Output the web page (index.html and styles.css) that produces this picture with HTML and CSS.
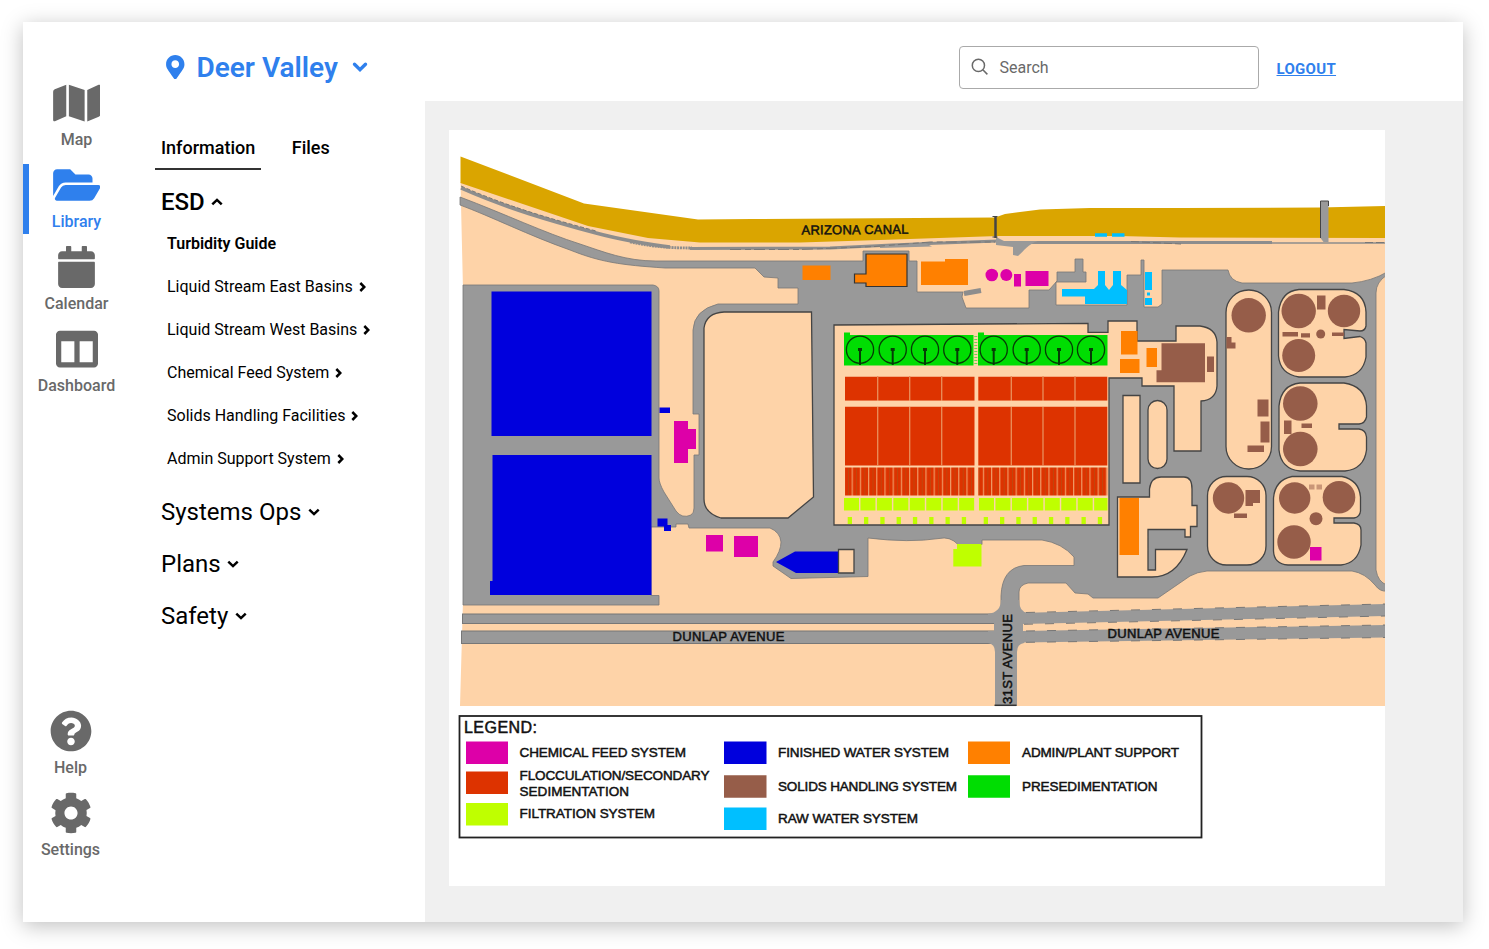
FILE: index.html
```html
<!DOCTYPE html>
<html lang="en">
<head>
<meta charset="utf-8">
<title>Deer Valley Library</title>
<link rel="stylesheet" href="styles.css">
</head>
<body>
<div class="app">
  <nav class="rail">
    <div class="rail-group">
      <a class="rail-item"><span class="rail-icon"><svg width="47.5" height="42" viewBox="0 0 576 512"><path d="M0 117.66v346.32c0 11.32 11.43 19.06 21.94 14.86L160 416V32L20.12 87.95A32.006 32.006 0 0 0 0 117.66zM192 416l192 64V96L192 32v384zM554.06 33.16L416 96v384l139.88-55.95A31.996 31.996 0 0 0 576 394.34V48.02c0-11.32-11.43-19.06-21.94-14.86z"/></svg></span><span class="rail-label">Map</span></a>
      <a class="rail-item active"><span class="rail-icon"><svg width="47.5" height="42" viewBox="0 0 576 512"><path d="M572.694 292.093L500.27 416.248A63.997 63.997 0 0 1 444.989 448H45.025c-18.523 0-30.064-20.093-20.731-36.093l72.424-124.155A64 64 0 0 1 152 256h399.964c18.523 0 30.064 20.093 20.73 36.093zM152 224h328v-48c0-26.51-21.49-48-48-48H272l-64-64H48C21.49 64 0 85.49 0 112v278.046l69.077-118.418C86.214 242.25 117.989 224 152 224z"/></svg></span><span class="rail-label">Library</span></a>
      <a class="rail-item"><span class="rail-icon"><svg width="37" height="42" viewBox="0 0 448 512"><path d="M12 192h424c6.6 0 12 5.4 12 12v260c0 26.5-21.5 48-48 48H48c-26.5 0-48-21.5-48-48V204c0-6.6 5.4-12 12-12zm436-44v-36c0-26.5-21.5-48-48-48h-48V12c0-6.6-5.4-12-12-12h-40c-6.6 0-12 5.4-12 12v52H160V12c0-6.6-5.4-12-12-12h-40c-6.6 0-12 5.4-12 12v52H48C21.5 64 0 85.5 0 112v36c0 6.6 5.4 12 12 12h424c6.6 0 12-5.4 12-12z"/></svg></span><span class="rail-label">Calendar</span></a>
      <a class="rail-item"><span class="rail-icon"><svg width="42" height="42" viewBox="0 0 512 512"><path d="M464 32H48C21.49 32 0 53.49 0 80v352c0 26.51 21.49 48 48 48h416c26.51 0 48-21.49 48-48V80c0-26.51-21.49-48-48-48zM224 416H64V160h160v256zm224 0H288V160h160v256z"/></svg></span><span class="rail-label">Dashboard</span></a>
    </div>
    <div class="rail-group rail-bottom">
      <a class="rail-item"><span class="rail-icon"><svg width="42" height="42" viewBox="0 0 512 512"><path d="M504 256c0 136.997-111.043 248-248 248S8 392.997 8 256C8 119.083 119.043 8 256 8s248 111.083 248 248zM262.655 90c-54.497 0-89.255 22.957-116.549 63.758-3.536 5.286-2.353 12.415 2.715 16.258l34.699 26.31c5.205 3.947 12.621 3.008 16.665-2.122 17.864-22.658 30.113-35.797 57.303-35.797 20.429 0 45.698 13.148 45.698 32.958 0 14.976-12.363 22.667-32.534 33.976C247.128 238.528 216 254.941 216 296v4c0 6.627 5.373 12 12 12h56c6.627 0 12-5.373 12-12v-1.333c0-28.462 83.186-29.647 83.186-106.667 0-58.002-60.165-102-116.531-102zM256 338c-25.365 0-46 20.635-46 46 0 25.364 20.635 46 46 46s46-20.636 46-46c0-25.365-20.635-46-46-46z"/></svg></span><span class="rail-label">Help</span></a>
      <a class="rail-item"><span class="rail-icon"><svg width="42" height="42" viewBox="0 0 512 512"><path d="M487.4 315.7l-42.6-24.6c4.3-23.2 4.3-47 0-70.2l42.6-24.6c4.9-2.8 7.1-8.6 5.5-14-11.1-35.6-30-67.8-54.7-94.6-3.8-4.1-10-5.1-14.8-2.3L380.8 110c-17.9-15.4-38.5-27.3-60.8-35.1V25.8c0-5.6-3.9-10.5-9.4-11.7-36.7-8.2-74.3-7.8-109.2 0-5.5 1.2-9.4 6.1-9.4 11.7V75c-22.2 7.9-42.8 19.8-60.8 35.1L88.7 85.5c-4.9-2.8-11-1.9-14.8 2.3-24.7 26.7-43.6 58.9-54.7 94.6-1.7 5.4.6 11.2 5.5 14L67.3 221c-4.3 23.2-4.3 47 0 70.2l-42.6 24.6c-4.9 2.8-7.1 8.6-5.5 14 11.1 35.6 30 67.8 54.7 94.6 3.8 4.1 10 5.1 14.8 2.3l42.6-24.6c17.9 15.4 38.5 27.3 60.8 35.1v49.2c0 5.6 3.9 10.5 9.4 11.7 36.7 8.2 74.3 7.8 109.2 0 5.5-1.2 9.4-6.1 9.4-11.7v-49.2c22.2-7.9 42.8-19.8 60.8-35.1l42.6 24.6c4.9 2.8 11 1.9 14.8-2.3 24.7-26.7 43.6-58.9 54.7-94.6 1.5-5.5-.7-11.3-5.6-14.1zM256 336c-44.1 0-80-35.9-80-80s35.9-80 80-80 80 35.9 80 80-35.9 80-80 80z"/></svg></span><span class="rail-label">Settings</span></a>
    </div>
  </nav>

  <div class="main">
    <header class="topbar">
      <div class="site">
        <svg class="pin" width="18.5" height="24.5" viewBox="0 0 384 512"><path d="M172.268 501.67C26.97 291.031 0 269.413 0 192 0 85.961 85.961 0 192 0s192 85.961 192 192c0 77.413-26.97 99.031-172.268 309.67-9.535 13.774-29.93 13.773-39.464 0zM192 272c44.183 0 80-35.817 80-80s-35.817-80-80-80-80 35.817-80 80 35.817 80 80 80z"/></svg>
        <span class="site-name">Deer Valley</span>
        <svg class="site-chevron" width="16" height="12" viewBox="0 0 16 12"><path d="M2.500 3.200L8 8.600l5.500-5.400"/></svg>
      </div>
      <div class="tools">
        <label class="search">
          <svg width="18" height="18" viewBox="0 0 18 18"><circle cx="7.4" cy="7.4" r="6.1"/><path d="M11.8 11.8l4.600 4.600"/></svg>
          <span>Search</span>
        </label>
        <a class="logout">LOGOUT</a>
      </div>
    </header>

    <div class="body">
      <aside class="library">
        <div class="tabs"><a class="tab current">Information</a><a class="tab">Files</a></div>
        <h2 class="section open">ESD <svg width="12" height="8" viewBox="0 0 12 8"><path d="M1.3 6.4L6 1.9l4.7 4.5"/></svg></h2>
        <ul class="links">
          <li class="bold">Turbidity Guide</li>
          <li>Liquid Stream East Basins <svg width="7" height="10" viewBox="0 0 7 10"><path d="M1.3 1l4 4-4 4"/></svg></li>
          <li>Liquid Stream West Basins <svg width="7" height="10" viewBox="0 0 7 10"><path d="M1.3 1l4 4-4 4"/></svg></li>
          <li>Chemical Feed System <svg width="7" height="10" viewBox="0 0 7 10"><path d="M1.3 1l4 4-4 4"/></svg></li>
          <li>Solids Handling Facilities <svg width="7" height="10" viewBox="0 0 7 10"><path d="M1.3 1l4 4-4 4"/></svg></li>
          <li>Admin Support System <svg width="7" height="10" viewBox="0 0 7 10"><path d="M1.3 1l4 4-4 4"/></svg></li>
        </ul>
        <h2 class="section">Systems Ops <svg width="12" height="8" viewBox="0 0 12 8"><path d="M1.3 1.6L6 6.1l4.7-4.5"/></svg></h2>
        <h2 class="section">Plans <svg width="12" height="8" viewBox="0 0 12 8"><path d="M1.3 1.6L6 6.1l4.7-4.5"/></svg></h2>
        <h2 class="section">Safety <svg width="12" height="8" viewBox="0 0 12 8"><path d="M1.3 1.6L6 6.1l4.7-4.5"/></svg></h2>
      </aside>

      <main class="viewer">
        <svg class="plan" width="936" height="756" viewBox="449 130 936 756">
          <defs>
            <pattern id="slots" x="843.4" y="0" width="8.2" height="40" patternUnits="userSpaceOnUse">
              <rect class="red" width="8.2" height="40"/>
              <path d="M.6 0v40" stroke="#ee9a66" stroke-width="1.2"/>
              <path d="M5 0v40" stroke="#b84a10" stroke-width=".8"/>
            </pattern>
          </defs>
          <!-- ground and canal -->
          <path class="land" d="M460.500 182L588 225l110 16 300-7 387 2V706H460L463 600V290Z"/>
          <path class="canal" d="M460.500 156.500L584 203.500l114 16 54-.5 243-1.500 10-3.500 35-4.500 50-1.500h90l140-.500 65-1.500V238l-205-.500-60-1.500H998l-118 4-80 2.500H700l-52-4.500-60-12-127.500-43Z"/>
          <!-- canal side roads -->
          <path class="road-line" stroke-width="3.500" d="M461 188c45 20 90 33 135 45 22 6 55 12 74 14"/>
          <path class="edge" d="M461 186c45 20 90 33 135 45" stroke-dasharray="4 2"/>
          <path class="road-line" stroke-width="2.800" stroke-dasharray="2 .8" d="M630 242c20 4 35 6 62 6"/>
          <path class="road-line" stroke-width="3" d="M690 248.500l140-.5 62-3 36-1.500 70-2.500"/>
          <path class="road" d="M880 248l52-1.500-6-3-46 2Z"/>
          <path class="edge" stroke-dasharray="11 4 6 3" d="M730 249.500h70l75-3 55-4.500 65 0"/>
          <path class="road-line" stroke-width="2.800" d="M996 242.500h276"/>
          <path class="road-line" stroke-width="1.500" d="M1272 243h113"/>
          <path class="edge" stroke-dasharray="8 3" d="M1131 241.500l50 2.500M1365 242.500h20"/>
          <path class="road" d="M996 237l8 4h34c-10 3-14 10-20 15l-5-1v-8l-17-2Z"/>
          <path class="dark" d="M995.500 216v22" stroke-width="2.500"/>
          <path class="island-line" d="M992.500 216.500h5M992.500 237h5"/>
          <path class="road" d="M1320.500 238v-37h8v41h-5Z"/>
          <path class="island-line" fill="none" d="M1320.500 238v-37h8v5"/>
          <!-- main plant pavement -->
          <path class="road edged" d="M460 197c45 17 85 36 120 47 24 8 46 17 76 17H863V251h46v10h8v31h46l-1 5 4 11h63V290h20l8-9V272h18V259h8v13h3v10h-30v23h71V275h14V260h3v47h14l4-3V270h66q2 11 14 13h110q20-2 35-11v3q-11 7-11 18V570q2 12 11 15v6q-7 1-12-6-10-12-23-14H1207q-10 1-17 5l-32 22h-65l-5-4-13-1-9-10h-38q-9 2-9 9v22q5 6 12 6h-42q8-2 12-8v-16Q1002 568 1024 565.500H1074V557Q1062 543 1042 540H982V544.500H958Q950 536 939 538.500 909 543 868 538V576.500L791 578.500 773 566V562Q781 551 781 542 780 532 770 528H689L688 524H676V527H651V595.500H659V605H463V285h190q6 1 6 6V478q0 5 5 14l12 19q6 8 15 4 3-2 3-7V455h5V414h-6V330q1-20 25-26h80V288h-20V278l-14-1-9-9h-90C620 265 600 262 570 250 530 236 490 216 460 205Z"/>
          <path class="road-line" d="M964 293.500l17-3" stroke-width="5"/>
          <!-- finished water -->
          <path class="water" d="M491.500 291.500H651.500V436H491.500ZM492.500 455H651.500V595H490V581h2.500ZM659.500 407.500h10.500v5.500h-10.500ZM657.500 518.500h10v6.500h3.500v6h-7v-4.500h-6.500ZM776 562l19-10.500h43.500V573H796Z"/>
          <!-- peach islands -->
          <path class="island" d="M724 312H811.500L813.500 497 788 518H721Q704 513 704 499V328Q706 313 724 312Z"/>
          <path class="island" d="M834 325L1088 323.300V332.300H1108V321H1137V341H1176V326H1200Q1216 328 1217 342V386Q1216 400 1201 401V451H1174V386H1142V378H1109V525H834Z"/>
          <path class="island" d="M838.500 549.500h15.500v23.500h-15.500ZM1123 395.500h17V483h-17Z"/>
          <rect class="island" x="1148" y="400.500" width="19" height="68" rx="9.500"/>
          <path class="island" d="M1117.500 497H1149.500V489Q1151 477 1161 477H1184Q1192 477 1192 489V505.500H1197V526.500H1190.500V537H1185V529.500H1148V570H1155.500V549.500H1187Q1176 577 1152 577H1117.500Z"/>
          <rect class="island" x="1226" y="290" width="45.500" height="179" rx="22.500"/>
          <path class="island" d="M1299 289.500H1344Q1365 292 1366 312V326Q1365 331 1360 331L1344 329.500V338.500L1360 336.500Q1365 338 1366 343V357Q1363 375 1345 377H1299Q1280 374 1278.500 356V312Q1281 291 1299 289.500Z"/>
          <path class="island" d="M1300 383H1344Q1365 386 1366.500 406V417Q1365 423.500 1359 424H1339V429H1359Q1366 430 1366.500 437V450Q1364 469 1345 471H1300Q1281 469 1279 450V406Q1281 385 1300 383Z"/>
          <rect class="island" x="1207.500" y="476.500" width="58.500" height="88.500" rx="19"/>
          <path class="island" d="M1292 476.500H1342Q1359 480 1360.500 497V511Q1360 517 1354 518H1334V523H1354Q1361 524 1361 530V545Q1358 563 1341 565H1288Q1274 564 1273.500 551V498Q1275 480 1292 476.500Z"/>
          <!-- presedimentation -->
          <path class="green" d="M844 332.500h6v2.500h123.500v30.500H844ZM978 332.500h6v2.500h123.500v30.500H978Z"/>
          <path d="M975.800 336v30" stroke="#65d950" stroke-width="3" stroke-dasharray="1 2"/>
          <g fill="none" stroke="#063c06" stroke-width="1.300">
            <circle cx="860" cy="349.700" r="13.600"/><circle cx="892.700" cy="349.700" r="13.600"/><circle cx="925" cy="349.700" r="13.600"/><circle cx="957.300" cy="349.700" r="13.600"/><circle cx="993.700" cy="349.700" r="13.600"/><circle cx="1026.700" cy="349.700" r="13.600"/><circle cx="1059" cy="349.700" r="13.600"/><circle cx="1091" cy="349.700" r="13.600"/>
            <path stroke-width="2" d="M860 349v16M892.700 349v16M925 349v16M957.300 349v16M993.700 349v16M1026.700 349v16M1059 349v16M1091 349v16"/>
            <path stroke-width="3" d="M858 349.500h4M890.700 349.500h4M923 349.500h4M955.300 349.500h4M991.700 349.500h4M1024.700 349.500h4M1057 349.500h4M1089 349.500h4"/>
          </g>
          <!-- flocculation and sedimentation -->
          <path class="red" d="M845 376.700h129.500v24H845ZM978.300 376.700h129v24h-129ZM845 406.500h129.500v59H845ZM978.300 406.500h129v59h-129Z"/>
          <path d="M877.700 376v90M909.700 376v90M941.700 376v90M1011.300 376v90M1043 376v90M1075 376v90" stroke="#e9905c" stroke-width="1.300"/>
          <path class="land" d="M844 400.700h264v5.800H844Z"/>
          <path fill="url(#slots)" d="M845 467.500h129.500v28H845ZM978.300 467.500h129v28h-129Z"/>
          <!-- filtration -->
          <g fill="none" stroke="#bfff00">
            <path stroke-width="12.500" stroke-dasharray="15 1.450" d="M844 504.300h130.500M979 504.300h128.500"/>
            <path stroke-width="7" stroke-dasharray="4.300 12" d="M847.700 520.500h126M983.700 520.500h122"/>
          </g>
          <path class="lime" d="M957 544h24.500v22.500H953.300V549h3.700Z"/>
          <!-- chemical feed -->
          <path class="chem" d="M674 421h14v8h8v20h-8v14h-14ZM706 535h17v16.500h-17ZM734 536h24v21h-24ZM1014 274h7v12.500h-7ZM1025.500 271h23v15h-23ZM1310 547h11.500v13.500H1310Z"/>
          <circle class="chem" cx="991.800" cy="275" r="6.300"/><circle class="chem" cx="1006.300" cy="275" r="6"/>
          <!-- admin and plant support -->
          <path class="admin" d="M802.500 265.500h28v14.500h-28ZM921 261.500h24v-2.500h23v26h-47ZM1121 331h16.500v23.500H1121ZM1120 359h19.500v14H1120ZM1146.500 348h10.500v19h-10.500ZM1119.500 498h19.500v57h-19.500Z"/>
          <path class="admin" stroke="#333" stroke-width="1.200" d="M866 254h41v32.500h-41V283h-11.500v-9H866Z"/>
          <!-- raw water -->
          <path class="raw" d="M1095 233.300h12v3.400h-12ZM1112 233.300h12.500v3.400H1112ZM1062 289h32l4-4v-14h7v14l4 5 4-5v-14h8v14l6 5v14h-42v-7.500H1062ZM1145 272h7v18h-7ZM1147 292.500h3v3h-3ZM1145 298h7v7h-7Z"/>
          <!-- solids handling -->
          <path class="solid" d="M1161.500 343.300h43.500v39h-48.500v-12h5ZM1207 356.500h7v15.500h-7ZM1226.500 337h5v5.500h4v6h-9ZM1257.500 399.500h11v17h-11ZM1260.500 421.500h9v21h-9ZM1247.500 445.500h16.500v6.500h-16.500ZM1317 295.500h8.500v14h-8.500ZM1282.500 332h15.500v4.500h-15.500ZM1301 333.300h9v4.200h-9ZM1332 332.500h12v3.500h-12ZM1284 420.500h7.500v13.500h-7.500ZM1301.500 423.500h10.500v4.500h-10.500ZM1245.500 490h14.500v13h-7v3h-7.500ZM1234 513.500h13v4.500h-13Z"/>
          <path fill="#c99577" d="M1309 484.500h5.500v5h-5.500ZM1316.500 484.500h5.500v5h-5.500Z"/>
          <g class="solid">
            <circle cx="1248.700" cy="315.300" r="17.200"/><circle cx="1298.700" cy="311" r="17.200"/><circle cx="1344" cy="311" r="16.200"/><circle cx="1298.700" cy="355.500" r="16.500"/><circle cx="1320.700" cy="334" r="4.500"/>
            <circle cx="1300.300" cy="403.500" r="17.300"/><circle cx="1300.300" cy="449" r="17.300"/><circle cx="1228.500" cy="498" r="15.700"/><circle cx="1294.700" cy="498" r="15.700"/><circle cx="1339" cy="497.300" r="16.300"/><circle cx="1316" cy="518.700" r="6.500"/><circle cx="1294" cy="542" r="16.700"/>
          </g>
          <!-- avenues -->
          <path class="road" d="M462 614H995v9H462ZM461 631H997v12.500H461ZM1016 613L1385 604v12L1022 624ZM1022 631l363-6v12.500l-363 5Z"/>
          <path class="edge" d="M462 614H995M462 623.500H995M461 631H995M461 643.500H995M462.500 614v9M461.500 631v12"/>
          <path class="road" d="M1001 600h18q0 12 9 13v11h-5v7h5l-4 12q-7 1-7 9v54h-22v-54q0-8-7-9v-12h6v-8h-6v-9q13-2 13-14Z"/>
          <path class="edge" stroke-dasharray="9 12" stroke-width="1.300" d="M1026 612.500L1385 604M1024 624.300L1385 616M1026 631L1385 625M1026 642.300L1385 637.500"/>
          <path d="M994.500 705.300h22" stroke="#333" stroke-width="1.500"/>
          <g class="map-text">
            <text x="801.500" y="234.500" textLength="107" transform="rotate(-.4 801 235)">ARIZONA CANAL</text>
            <text x="672.500" y="641" textLength="112">DUNLAP AVENUE</text>
            <text x="1107.500" y="638.300" textLength="112">DUNLAP AVENUE</text>
            <text transform="translate(1012.300 704) rotate(-90)" textLength="90">31ST AVENUE</text>
          </g>
          <!-- legend -->
          <rect x="459.500" y="716" width="742" height="121.500" fill="none" stroke="#222" stroke-width="1.800"/>
          <path class="chem" d="M466 741.500h42v22.500h-42Z"/><path class="red" d="M466 771.500h42v22.500h-42Z"/><path class="lime" d="M466 803h42v22.500h-42Z"/>
          <path class="water" d="M724 741.500h42.500v22.500H724Z"/><path class="solid" d="M724 775.300h42.500v22.500H724Z"/><path class="raw" d="M724 807.500h42.500V830H724Z"/>
          <path class="admin" d="M968 741.500h42v22.500h-42Z"/><path class="green" d="M968 775.300h42v22.500h-42Z"/>
          <g class="legend-text">
            <text class="legend-title" x="464" y="732.800" textLength="73">LEGEND:</text>
            <text x="519.500" y="756.500" textLength="166.500">CHEMICAL FEED SYSTEM</text>
            <text x="519.500" y="780" textLength="190">FLOCCULATION/SECONDARY</text>
            <text x="519.500" y="795.700" textLength="109.500">SEDIMENTATION</text>
            <text x="519.500" y="818.300" textLength="135.500">FILTRATION SYSTEM</text>
            <text x="778" y="756.500" textLength="171">FINISHED WATER SYSTEM</text>
            <text x="778" y="790.800" textLength="179">SOLIDS HANDLING SYSTEM</text>
            <text x="778" y="823" textLength="140">RAW WATER SYSTEM</text>
            <text x="1022" y="756.500" textLength="157">ADMIN/PLANT SUPPORT</text>
            <text x="1022" y="790.800" textLength="135.500">PRESEDIMENTATION</text>
          </g>
        </svg>
      </main>
    </div>
  </div>
</div>
</body>
</html>
```
FILE: styles.css
```css
* { box-sizing: border-box; }
body {
  margin: 0;
  height: 949px;
  padding: 22px 0 0 23px;
  overflow: hidden;
  background: #fff;
  font-family: Roboto, "Liberation Sans", sans-serif;
  color: #000;
}
svg { display: block; flex: none; }
.app {
  display: flex;
  width: 1440px;
  height: 900px;
  background: #fff;
  box-shadow: 0 4px 20px rgba(0, 0, 0, .25);
}

/* icon rail */
.rail {
  display: flex;
  flex-direction: column;
  justify-content: space-between;
  width: 107px;
  padding: 60px 0;
}
.rail-group { display: flex; flex-direction: column; gap: 12px; }
.rail-bottom { width: 95px; }
.rail-item {
  display: flex;
  flex-direction: column;
  align-items: center;
  height: 70px;
  color: #696969;
  fill: #696969;
}
.rail-item.active {
  color: #2f80ed;
  fill: #2f80ed;
  box-shadow: inset 6px 0 #2f80ed;
}
.rail-icon { display: flex; align-items: center; height: 42px; }
.rail-label {
  margin-top: 6px;
  font-size: 16px;
  line-height: 19px;
  font-weight: 500;
}

.main { display: flex; flex-direction: column; flex: 1; }

/* top bar */
.topbar {
  display: flex;
  align-items: center;
  justify-content: space-between;
  height: 79px;
  padding: 11px 126.500px 0 36px;
}
.site { display: flex; align-items: center; color: #2f80ed; fill: #2f80ed; }
.site-name {
  margin-left: 12px;
  font-size: 28px;
  line-height: 33px;
  font-weight: 600;
}
.site-chevron {
  margin-left: 14px;
  fill: none;
  stroke: #2f80ed;
  stroke-width: 3.400;
  stroke-linecap: round;
}
.tools { display: flex; align-items: center; gap: 18px; }
.search {
  display: flex;
  align-items: center;
  gap: 11px;
  width: 300px;
  height: 43px;
  padding-left: 11px;
  border: 1px solid #aaa;
  border-radius: 4px;
  color: #696969;
  font-size: 16px;
}
.search svg { fill: none; stroke: #696969; stroke-width: 1.500; }
.logout {
  width: 60px;
  padding-top: 3px;
  font-size: 15px;
  font-weight: 700;
  letter-spacing: .3px;
  white-space: nowrap;
  color: #2f80ed;
  text-decoration: underline;
}

.body { display: flex; flex: 1; }

/* library panel */
.library { width: 295px; padding: 27px 0 0 31px; }
.tabs { display: flex; margin-left: -6px; gap: 24.500px; }
.tab {
  height: 42px;
  padding: 9px 6px 0;
  font-size: 18px;
  line-height: 22px;
  font-weight: 500;
}
.tab.current { border-bottom: 2px solid #333; }
.section {
  display: flex;
  align-items: center;
  gap: 6.500px;
  height: 28px;
  margin: 0 0 24px;
  font-size: 24px;
  line-height: 28px;
  font-weight: 400;
}
.section.open { margin: 18px 0 13px; gap: 6px; font-weight: 500; }
.section svg, .links svg { fill: none; stroke: #000; stroke-width: 2.500; }
.links { margin: 0 0 11px; padding: 0 0 0 6px; list-style: none; }
.links li {
  display: flex;
  align-items: center;
  gap: 6px;
  height: 43px;
  padding-bottom: 14px;
  font-size: 16px;
  white-space: nowrap;
}
.links .bold { font-weight: 600; }

/* site plan */
.viewer { flex: 1; padding: 29px 0 0 24px; background: #f0f0f0; }
.plan { background: #fff; }
.land { fill: #fed3a8; }
.canal { fill: #daa500; }
.road { fill: #999; }
.edged { stroke: #777; stroke-width: .8; }
.road-line { fill: none; stroke: #8d8d8d; }
.edge { fill: none; stroke: #777; stroke-width: 1; }
.dark, .island-line { stroke: #444; }
.island { fill: #fed3a8; stroke: #444; stroke-width: 1.300; }
.water { fill: #00d; }
.green { fill: #00dd02; }
.red { fill: #dd3300; }
.lime { fill: #bfff00; }
.chem { fill: #dd00a8; }
.admin { fill: #ff8000; }
.raw { fill: #00bfff; }
.solid { fill: #965d49; }
.map-text, .legend-text {
  font-family: "Liberation Sans", Arial, sans-serif;
  font-size: 13px;
  fill: #111;
  stroke: #111;
  stroke-width: .5px;
}
.legend-text { font-size: 13.500px; }
.legend-title { font-size: 16px; }
```
